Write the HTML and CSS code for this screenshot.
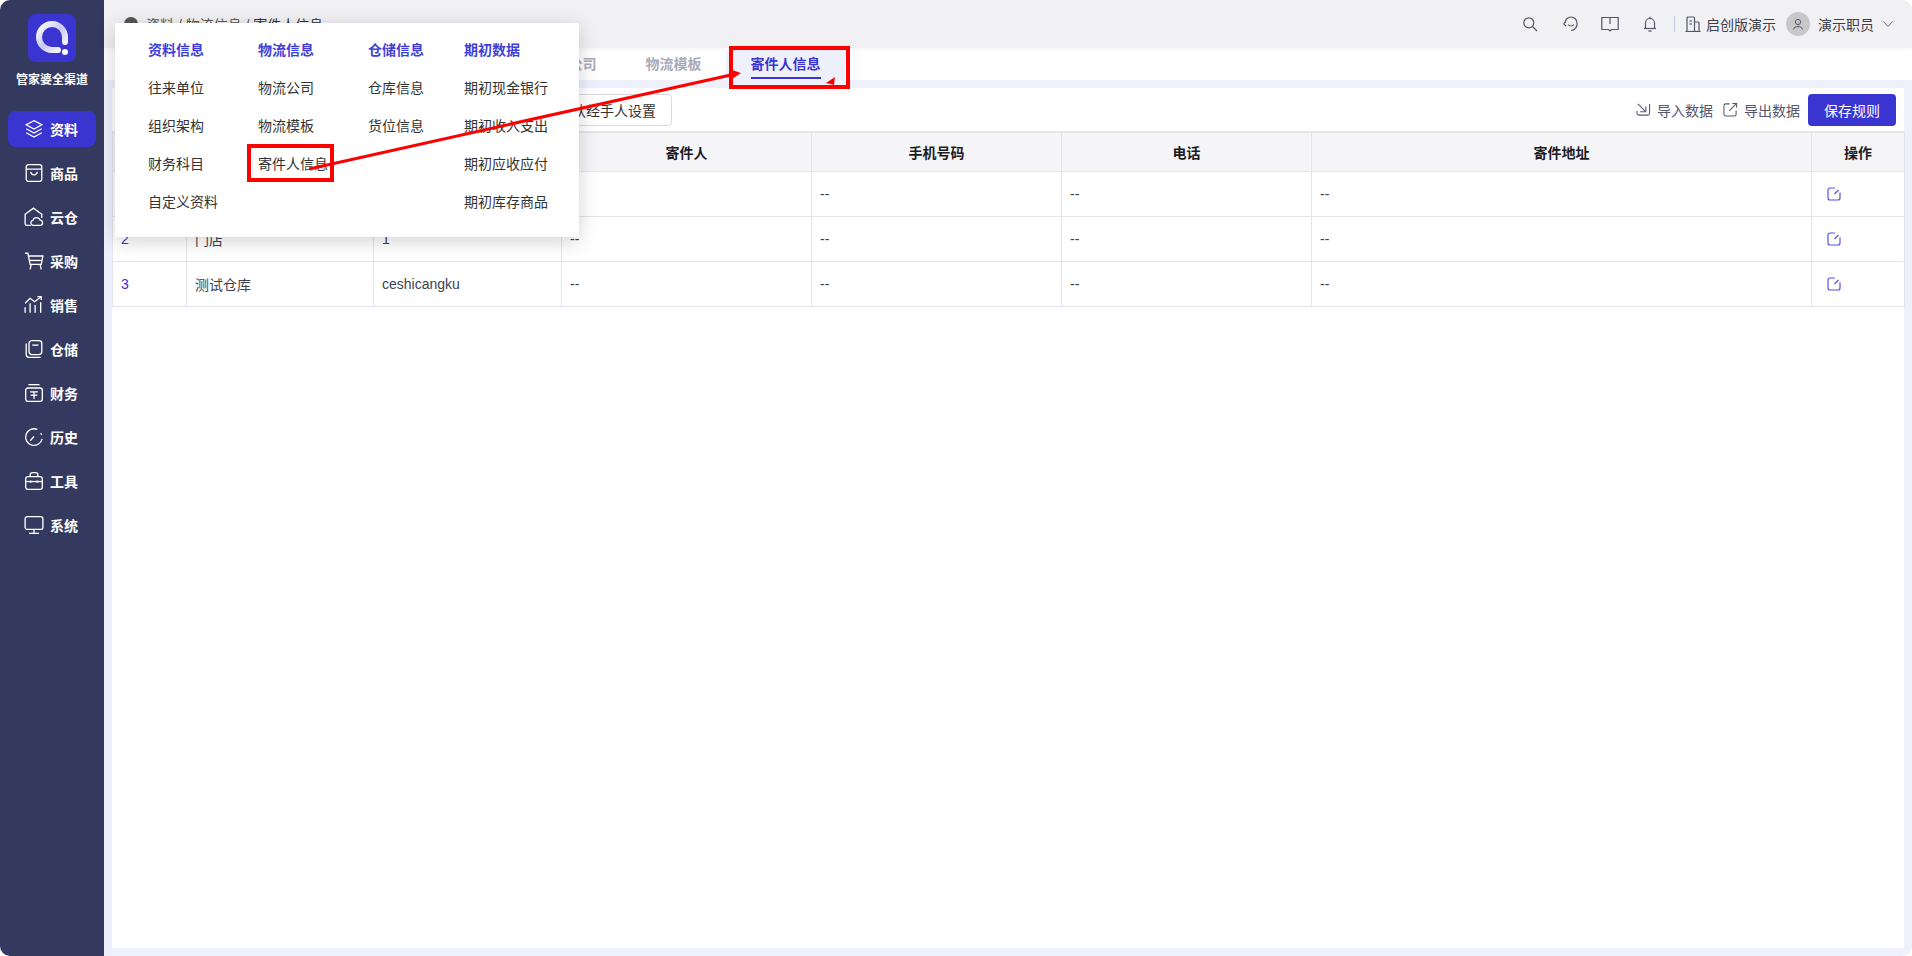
FILE: index.html
```html
<!DOCTYPE html>
<html lang="zh-CN">
<head>
    <meta charset="UTF-8">
    <meta name="viewport" content="width=device-width, initial-scale=1.0">
    <title>寄件人信息</title>
    <link rel="stylesheet" href="styles.css">
</head>
<body>
    <div class="app">
        <!-- Sidebar -->
        <div class="sidebar">
            <div class="brand">
                <svg class="logo" viewBox="0 0 48 48">
                    <defs>
                        <linearGradient id="ringFill" x1="0" y1="0" x2="1" y2="1">
                            <stop offset="0" stop-color="#ffffff"/>
                            <stop offset="0.5" stop-color="#c9c8f2"/>
                            <stop offset="1" stop-color="#ffffff"/>
                        </linearGradient>
                    </defs>
                    <rect width="48" height="48" rx="8" fill="#3a35d0"/>
                    <path d="M37 28 V23 A13 13 0 1 0 24 36 H30" fill="none" stroke="url(#ringFill)" stroke-width="6" stroke-linecap="round"/>
                    <circle cx="37" cy="38" r="3" fill="#fff"/>
                </svg>
                <div class="brand-name">管家婆全渠道</div>
            </div>
            <div class="nav">
                <div class="nav-item active">
                    <svg class="nav-icon" viewBox="0 0 18 18"><path d="M9 1.5 16 5.2 9 9 2 5.2Z"/><path d="M2 8.8 9 12.6 16 8.8"/><path d="M2 12.4 9 16.2 16 12.4"/></svg>
                    <span>资料</span>
                </div>
                <div class="nav-item">
                    <svg class="nav-icon" viewBox="0 0 18 18"><rect x="2" y="1.5" width="14" height="15" rx="2"/><path d="M2 5.5H16"/><path d="M6 8C6.5 11.5 11.5 11.5 12 8"/></svg>
                    <span>商品</span>
                </div>
                <div class="nav-item">
                    <svg class="nav-icon" viewBox="0 0 18 18"><path d="M6 16.5H2.5A1.5 1.5 0 0 1 1 15V6.5L8.5 1 16 6.5V10"/><path d="M8 16.5A2.3 2.3 0 0 1 8 12 3.4 3.4 0 0 1 14.5 11.8 2.4 2.4 0 0 1 15 16.5Z"/></svg>
                    <span>云仓</span>
                </div>
                <div class="nav-item">
                    <svg class="nav-icon" viewBox="0 0 18 18"><path d="M1 2H3.5L5.5 12H15.5L17 4.5H4"/><path d="M4.5 8.5H16"/><path d="M6.5 12 5.5 16.5"/><path d="M14.5 12 15.5 16.5"/></svg>
                    <span>采购</span>
                </div>
                <div class="nav-item">
                    <svg class="nav-icon" viewBox="0 0 18 18"><path d="M1 16V11"/><path d="M5.5 16V7.5"/><path d="M10 16V9"/><path d="M15 16V6.5"/><path d="M1 7.5 5.5 3 9.5 6 15.5 1.5"/><path d="M12 1.5H15.5V4.5"/></svg>
                    <span>销售</span>
                </div>
                <div class="nav-item">
                    <svg class="nav-icon" viewBox="0 0 18 18"><path d="M2 4V14A2.5 2.5 0 0 0 4.5 16.5H15"/><rect x="4.5" y="1.5" width="11.5" height="12.5" rx="2.5"/><path d="M7.5 5.5H13"/></svg>
                    <span>仓储</span>
                </div>
                <div class="nav-item">
                    <svg class="nav-icon" viewBox="0 0 18 18"><path d="M4 1.5H14"/><rect x="1.5" y="4.5" width="15" height="12" rx="2"/><path d="M5.5 8H12.5"/><path d="M6 11H12"/><path d="M9 8V14.5"/></svg>
                    <span>财务</span>
                </div>
                <div class="nav-item">
                    <svg class="nav-icon" viewBox="0 0 18 18"><path d="M16.3 10.7A7.5 7.5 0 1 1 12 2.2"/><path d="M5.5 12.5 9 8.5"/><path d="M15 5.5 16 7"/></svg>
                    <span>历史</span>
                </div>
                <div class="nav-item">
                    <svg class="nav-icon" viewBox="0 0 18 18"><path d="M5.5 5V3.5A2 2 0 0 1 7.5 1.5H10.5A2 2 0 0 1 12.5 3.5V5"/><rect x="1.5" y="5" width="15" height="11.5" rx="2"/><path d="M1.5 9.5H16.5"/><path d="M6 8.5V10.5"/><path d="M12 8.5V10.5"/></svg>
                    <span>工具</span>
                </div>
                <div class="nav-item">
                    <svg class="nav-icon" viewBox="0 0 18 18"><rect x="1" y="1.5" width="16" height="11.5" rx="2"/><path d="M9 13V16.5"/><path d="M4.5 16.5H13.5"/></svg>
                    <span>系统</span>
                </div>
            </div>
        </div>

        <div class="main">
            <!-- Header -->
            <div class="header">
                <div class="crumbs">
                    <span class="crumb-dot"></span>
                    <span>资料 / 物流信息 / <span class="crumb-last">寄件人信息</span></span>
                </div>
                <div class="header-right">
                    <svg class="head-icon" viewBox="0 0 16 16"><circle cx="6.8" cy="6.8" r="5"/><path d="M10.5 10.5 15 15"/></svg>
                    <svg class="head-icon head-talk" viewBox="0 0 16 16"><path d="M2 7A6 6 0 0 1 14 7 6.5 6.5 0 0 1 8 14.5"/><path d="M2 6 0.8 8 3 10"/><path d="M5.2 8.5C6.3 10.5 9.7 10.5 10.8 8.5"/></svg>
                    <svg class="head-icon head-book" viewBox="0 0 18 16"><path d="M0.8 1.5H17.2V13.5H10.5L9 15 7.5 13.5H0.8Z"/><path d="M9 1.5V8"/></svg>
                    <svg class="head-icon head-bell" viewBox="0 0 16 16"><path d="M3.5 12.5V7A4.5 4.5 0 0 1 12.5 7V12.5"/><path d="M2 12.5H14"/><path d="M8 0.8V2.5"/><path d="M6.3 15H9.7"/></svg>
                    <span class="head-divider"></span>
                    <div class="shop">
                        <svg class="head-icon" viewBox="0 0 16 16"><path d="M0.5 15.5H15.5"/><path d="M2 15.5V2A1 1 0 0 1 3 1H8.5A1 1 0 0 1 9.5 2V15.5"/><path d="M9.5 6H13A1 1 0 0 1 14 7V15.5"/><path d="M4.5 5H7"/><path d="M4.5 8H7"/></svg>
                        <span>启创版演示</span>
                    </div>
                    <div class="user">
                        <div class="avatar">
                            <svg viewBox="0 0 12 12"><circle cx="6" cy="4" r="2.6"/><path d="M1.5 11.5C2 7.5 10 7.5 10.5 11.5"/></svg>
                        </div>
                        <span>演示职员</span>
                        <svg class="chevron" viewBox="0 0 10 6"><path d="M0.5 0.5 5 5.5 9.5 0.5"/></svg>
                    </div>
                </div>
            </div>

            <!-- Tabs -->
            <div class="tabs">
                <div class="tab"><span>物流公司</span></div>
                <div class="tab"><span>物流模板</span></div>
                <div class="tab active"><span>寄件人信息</span></div>
            </div>

            <div class="panel-wrap">
                <div class="panel">
                    <div class="toolbar">
                        <button class="btn-outline">默认经手人设置</button>
                        <div class="toolbar-right">
                            <div class="tool-link">
                                <svg viewBox="0 0 16 16"><path d="M14.5 2V12A2 2 0 0 1 12.5 14H3A2 2 0 0 1 1 12V9.5"/><path d="M2 2 10 10"/><path d="M10.5 4.5V10.5H4.5"/></svg>
                                <span>导入数据</span>
                            </div>
                            <div class="tool-link">
                                <svg viewBox="0 0 16 16"><path d="M7 2H3A2 2 0 0 0 1 4V13A2 2 0 0 0 3 15H12A2 2 0 0 0 14 13V9"/><path d="M6.5 9.5 14 2"/><path d="M10 1.5H14.5V6"/></svg>
                                <span>导出数据</span>
                            </div>
                            <button class="btn-save">保存规则</button>
                        </div>
                    </div>

                    <table class="grid">
                        <colgroup>
                            <col class="col-no">
                            <col class="col-name">
                            <col class="col-code">
                            <col class="col-mid">
                            <col class="col-mid">
                            <col class="col-mid">
                            <col class="col-addr">
                            <col class="col-op">
                        </colgroup>
                        <thead>
                            <tr>
                                <th>序号</th>
                                <th>仓库名称</th>
                                <th>仓库编号</th>
                                <th>寄件人</th>
                                <th>手机号码</th>
                                <th>电话</th>
                                <th>寄件地址</th>
                                <th>操作</th>
                            </tr>
                        </thead>
                        <tbody>
                            <tr>
                                <td class="num">1</td>
                                <td>默认仓库</td>
                                <td>moren</td>
                                <td>--</td>
                                <td>--</td>
                                <td>--</td>
                                <td>--</td>
                                <td class="op"><svg class="edit" viewBox="0 0 14 14"><path d="M8 1H3A2 2 0 0 0 1 3V11A2 2 0 0 0 3 13H11A2 2 0 0 0 13 11V5.5"/><path d="M7.5 7 11.5 3"/></svg></td>
                            </tr>
                            <tr>
                                <td class="num">2</td>
                                <td>门店</td>
                                <td>1</td>
                                <td>--</td>
                                <td>--</td>
                                <td>--</td>
                                <td>--</td>
                                <td class="op"><svg class="edit" viewBox="0 0 14 14"><path d="M8 1H3A2 2 0 0 0 1 3V11A2 2 0 0 0 3 13H11A2 2 0 0 0 13 11V5.5"/><path d="M7.5 7 11.5 3"/></svg></td>
                            </tr>
                            <tr>
                                <td class="num">3</td>
                                <td>测试仓库</td>
                                <td>ceshicangku</td>
                                <td>--</td>
                                <td>--</td>
                                <td>--</td>
                                <td>--</td>
                                <td class="op"><svg class="edit" viewBox="0 0 14 14"><path d="M8 1H3A2 2 0 0 0 1 3V11A2 2 0 0 0 3 13H11A2 2 0 0 0 13 11V5.5"/><path d="M7.5 7 11.5 3"/></svg></td>
                            </tr>
                        </tbody>
                    </table>
                </div>
            </div>
        </div>

        <!-- Flyout menu -->
        <div class="flyout">
            <div class="fly-col">
                <div class="fly-title">资料信息</div>
                <div class="fly-item">往来单位</div>
                <div class="fly-item">组织架构</div>
                <div class="fly-item">财务科目</div>
                <div class="fly-item">自定义资料</div>
            </div>
            <div class="fly-col">
                <div class="fly-title">物流信息</div>
                <div class="fly-item">物流公司</div>
                <div class="fly-item">物流模板</div>
                <div class="fly-item">寄件人信息</div>
            </div>
            <div class="fly-col">
                <div class="fly-title">仓储信息</div>
                <div class="fly-item">仓库信息</div>
                <div class="fly-item">货位信息</div>
            </div>
            <div class="fly-col">
                <div class="fly-title">期初数据</div>
                <div class="fly-item">期初现金银行</div>
                <div class="fly-item">期初收入支出</div>
                <div class="fly-item">期初应收应付</div>
                <div class="fly-item">期初库存商品</div>
            </div>
        </div>

        <!-- Red annotation over the page -->
        <svg class="marks" viewBox="0 0 1912 956">
            <rect x="249" y="146" width="83" height="34" fill="none" stroke="#f00" stroke-width="4"/>
            <rect x="731" y="48" width="117" height="39" fill="none" stroke="#f00" stroke-width="4"/>
            <path d="M309 169 733 74.5" stroke="#f00" stroke-width="3"/>
            <polygon points="741,73 729,69 732,79" fill="#f00"/>
            <polygon points="826,83 835,77 834,85" fill="#f00"/>
        </svg>
    </div>
</body>
</html>
```

FILE: styles.css
```css
/* General styles */
* {
    margin: 0;
    padding: 0;
    box-sizing: border-box;
}

body {
    font-family: 'Liberation Sans', 'Noto Sans CJK SC', sans-serif;
    font-size: 14px;
    color: #333;
    background: #fff;
    height: 100vh;
    overflow: hidden;
}

.app {
    position: relative;
    display: flex;
    height: 956px;
    border-radius: 10px;
    overflow: hidden;
}

/* Sidebar */
.sidebar {
    width: 104px;
    flex-shrink: 0;
    background: #343a5f;
    color: #fff;
}

.brand {
    display: flex;
    flex-direction: column;
    align-items: center;
    padding-top: 14px;
}

.logo {
    width: 48px;
    height: 48px;
}

.brand-name {
    margin-top: 10px;
    font-size: 12px;
    line-height: 16px;
    font-weight: bold;
}

.nav {
    display: flex;
    flex-direction: column;
    gap: 8px;
    padding: 23px 8px 0;
}

.nav-item {
    display: flex;
    align-items: center;
    gap: 6px;
    height: 36px;
    padding-left: 16px;
    border-radius: 8px;
    font-weight: bold;
}

.nav-item.active {
    background: #3a35d0;
}

.nav-icon {
    width: 20px;
    height: 20px;
    fill: none;
    stroke: #fff;
    stroke-width: 1.2;
    flex-shrink: 0;
}

/* Main area */
.main {
    flex: 1;
    display: flex;
    flex-direction: column;
    min-width: 0;
    background: #eef0fc;
}

.header {
    position: relative;
    display: flex;
    align-items: center;
    justify-content: space-between;
    height: 48px;
    padding: 0 19px 0 20px;
    background: #f1f1f4;
    box-shadow: 0 2px 4px rgba(0, 0, 0, 0.03);
}

.crumbs {
    display: flex;
    align-items: center;
    gap: 8px;
    color: #555;
}

.crumb-last {
    color: #333;
}

.crumb-dot {
    width: 14px;
    height: 14px;
    border-radius: 50%;
    background: #555;
}

.header-right {
    display: flex;
    align-items: center;
    color: #3d3d4e;
}

.head-icon {
    width: 16px;
    height: 16px;
    fill: none;
    stroke: #55566a;
    stroke-width: 1.2;
    margin-right: 25px;
}

.head-talk {
    margin-right: 22px;
}

.head-book {
    width: 18px;
    margin-right: 23px;
}

.head-bell {
    margin-right: 16px;
}

.head-divider {
    width: 1px;
    height: 16px;
    background: #c4c8e6;
    margin-right: 10px;
}

.shop {
    display: flex;
    align-items: center;
    gap: 5px;
}

.shop .head-icon {
    margin-right: 0;
}

.user {
    display: flex;
    align-items: center;
    margin-left: 10px;
}

.avatar {
    display: flex;
    align-items: center;
    justify-content: center;
    width: 24px;
    height: 24px;
    margin-right: 8px;
    border-radius: 50%;
    background: #c8c8ca;
}

.avatar svg {
    width: 12px;
    height: 12px;
    fill: none;
    stroke: #55566a;
    stroke-width: 1;
}

.chevron {
    width: 10px;
    height: 6px;
    margin-left: 9px;
    fill: none;
    stroke: #70717f;
    stroke-width: 1;
}

/* Tabs */
.tabs {
    display: flex;
    height: 32px;
    padding-left: 412px;
    background: #fff;
}

.tab {
    height: 30px;
    margin-top: 2px;
    padding: 0 24.5px;
    border-radius: 4px 4px 0 0;
    color: #a9abb8;
    font-weight: bold;
    font-size: 14px;
    line-height: 28px;
}

.tab span {
    display: inline-block;
    height: 29px;
}

.tab.active {
    color: #3a35d0;
    background: #eef0fc;
}

.tab.active span {
    border-bottom: 2px solid #3a35d0;
}

.panel-wrap {
    flex: 1;
    padding: 8px 8px 8px;
    min-height: 0;
}

.panel {
    height: 100%;
    background: #fff;
}

.toolbar {
    display: flex;
    align-items: center;
    justify-content: space-between;
    height: 44px;
    padding: 0 8px 0 430px;
    border-bottom: 1px solid #e6e6ee;
}

.btn-outline {
    height: 32px;
    padding: 0 15px;
    border: 1px solid #d9d9e2;
    border-radius: 4px;
    background: #fff;
    color: #333;
    font: inherit;
}

.toolbar-right {
    display: flex;
    align-items: center;
}

.tool-link {
    display: flex;
    align-items: center;
    gap: 6px;
    margin-right: 10px;
    color: #55566a;
}

.tool-link:nth-child(2) {
    margin-right: 8px;
}

.tool-link svg {
    width: 15px;
    height: 15px;
    fill: none;
    stroke: #55566a;
    stroke-width: 1.1;
}

.btn-save {
    width: 88px;
    height: 32px;
    border: none;
    border-radius: 4px;
    background: #3a35d0;
    color: #fff;
    font: inherit;
}

/* Table */
.grid {
    width: 1792px;
    table-layout: fixed;
    border-collapse: collapse;
}

.col-no { width: 74px; }
.col-name { width: 187px; }
.col-code { width: 188px; }
.col-mid { width: 250px; }
.col-addr { width: 500px; }
.col-op { width: 93px; }

.grid th,
.grid td {
    border: 1px solid #e4e4ec;
    text-align: left;
    padding: 0 8px;
}

.grid th {
    height: 39px;
    background: #f5f5f8;
    color: #1b1b26;
    text-align: center;
}

.grid td {
    height: 45px;
    color: #3d3f52;
}

.grid td.num {
    color: #3a35d0;
}

.grid td.op {
    padding-left: 15px;
}

.edit {
    display: block;
    width: 14px;
    height: 14px;
    fill: none;
    stroke: #5b50e8;
    stroke-width: 1.2;
}

/* Flyout menu */
.flyout {
    position: absolute;
    left: 115px;
    top: 23px;
    width: 464px;
    height: 214px;
    display: flex;
    padding: 16px 0 0 33px;
    border-radius: 2px;
    background: #fff;
    box-shadow: 0 4px 20px rgba(0, 0, 0, 0.18);
}

.fly-col {
    width: 110px;
}

.fly-col:nth-child(3) {
    width: 96px;
}

.fly-title,
.fly-item {
    height: 38px;
    line-height: 22px;
    white-space: nowrap;
}

.fly-title {
    color: #3f3fd8;
    font-weight: bold;
}

.fly-item {
    color: #333;
}

.marks {
    position: absolute;
    left: 0;
    top: 0;
    width: 1912px;
    height: 956px;
    pointer-events: none;
}
```
